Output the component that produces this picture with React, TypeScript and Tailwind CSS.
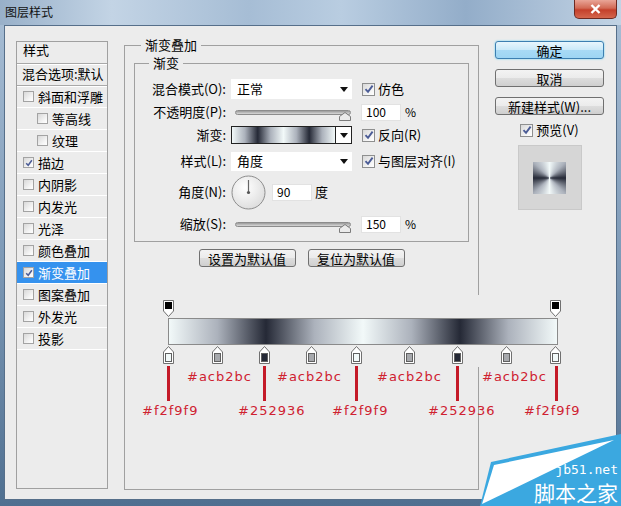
const sans = "font-['Noto_Sans_CJK_SC','Noto_Sans',sans-serif]";

const bar =
  "bg-[linear-gradient(90deg,#f2f9f9_0%,#acb2bc_12.5%,#252936_25%,#acb2bc_37.5%,#f2f9f9_50%,#acb2bc_62.5%,#252936_75%,#acb2bc_87.5%,#f2f9f9_100%)]";

function Box({ on, small }: { on?: boolean; small?: boolean }) {
  return (
    <span
      className={
        (small ? "h-[11px] w-[11px] border-[#a3a3a3]" : "h-[13px] w-[13px] border-[#8e8f8f]") +
        " inline-flex shrink-0 items-center justify-center border bg-[linear-gradient(135deg,#d8d8d8,#f6f6f6_70%,#ffffff)]"
      }
    >
      {on && (
        <svg viewBox="0 0 10 10" className={small ? "h-[8px] w-[8px]" : "h-[10px] w-[10px]"}>
          <path d="M1.5 5.2 L4 7.8 L8.6 1.6" stroke="#4b5c96" strokeWidth="1.9" fill="none" />
        </svg>
      )}
    </span>
  );
}

function Arrow() {
  return (
    <svg width="8" height="5" viewBox="0 0 8 5">
      <path d="M0 0 H8 L4 5 Z" fill="#111" />
    </svg>
  );
}

function Slider() {
  return (
    <div className="relative ml-[5px] flex h-[20px] w-[121px] items-center pl-[4px]">
      <div className="h-[5px] w-[116px] rounded-full border border-[#8c8c8c] bg-[linear-gradient(180deg,#9a9a9a,#d8d8d8)]" />
      <svg className="absolute right-[1px] top-[10px]" width="12" height="9" viewBox="0 0 12 9">
        <path d="M0.5 8.5 V4.5 L6 0.5 L11.5 4.5 V8.5 Z" fill="#ebebeb" stroke="#7c7c7c" />
      </svg>
    </div>
  );
}

function Field({ v, w = "w-[40px]" }: { v: string; w?: string }) {
  return (
    <div className={w + " flex h-[17px] items-center border border-[#e2e2e2] bg-white pl-[4px] text-[12px] text-black"}>
      {v}
    </div>
  );
}

function Btn({ children, w, primary }: { children: React.ReactNode; w: string; primary?: boolean }) {
  return (
    <div
      className={
        w +
        " flex h-[18px] items-center justify-center rounded-[3px] border text-[13px] leading-none text-black " +
        (primary
          ? "border-[#3c7fb1] bg-[linear-gradient(180deg,#e8f6fd,#c9e9f9_50%,#a8daf5_51%,#9dd5f3)] shadow-[0_0_2px_#5ad0f5]"
          : "border-[#707070] bg-[linear-gradient(180deg,#f3f3f3,#ebebeb_50%,#dddddd_51%,#cfcfcf)]")
      }
    >
      {children}
    </div>
  );
}

function StopUp({ fill }: { fill: string }) {
  return (
    <svg width="11" height="18" viewBox="0 0 11 18">
      <path d="M0.5 6 L5.5 0.5 L10.5 6 V17.5 H0.5 Z" fill="#fff" stroke="#707070" />
      <rect x="2.5" y="7.5" width="6" height="8" fill={fill} stroke="#606060" />
    </svg>
  );
}

function StopDown() {
  return (
    <svg width="11" height="17" viewBox="0 0 11 17">
      <path d="M0.5 0.5 H10.5 V11 L5.5 16.5 L0.5 11 Z" fill="#fff" stroke="#707070" />
      <rect x="2" y="2" width="7" height="7" fill="#000" />
    </svg>
  );
}

const rows: { t: string; on?: boolean; indent?: boolean; sel?: boolean }[] = [
  { t: "斜面和浮雕" },
  { t: "等高线", indent: true },
  { t: "纹理", indent: true },
  { t: "描边", on: true },
  { t: "内阴影" },
  { t: "内发光" },
  { t: "光泽" },
  { t: "颜色叠加" },
  { t: "渐变叠加", on: true, sel: true },
  { t: "图案叠加" },
  { t: "外发光" },
  { t: "投影" },
];

const bottomStops = [
  [38, "#f2f9f9"],
  [87, "#a7a9ad"],
  [134, "#252936"],
  [181, "#a7a9ad"],
  [226, "#f2f9f9"],
  [279, "#a7a9ad"],
  [327, "#252936"],
  [376, "#a7a9ad"],
  [425, "#f2f9f9"],
] as const;

const redLines = [42, 138, 230, 331, 430];
const midLabels = [62, 152, 252, 357];
const endLabels: [number, string][] = [
  [17, "#f2f9f9"],
  [113, "#252936"],
  [207, "#f2f9f9"],
  [303, "#252936"],
  [399, "#f2f9f9"],
];

export default function App() {
  return (
    <div
      className={
        sans +
        " relative h-[506px] w-[621px] overflow-hidden bg-[linear-gradient(180deg,#a9bfd6,#7f9bb8_50%,#4f6f90)] text-black"
      }
    >
      {/* title bar */}
      <div className="flex h-[25px] items-start justify-between bg-[linear-gradient(90deg,#98b0c9,#c3d4e5_18%,#a6bdd5_40%,#b9cde1_55%,#93adc9_75%,#c2d3e4)]">
        <span className="ml-[5px] mt-[3px] text-[12px] leading-[18px] text-[#111]">图层样式</span>
        <div className="mr-[4px] flex h-[19px] w-[43px] items-center justify-center rounded-b-[5px] border border-t-0 border-[#6d2a22] bg-[linear-gradient(180deg,#e9a597,#d26a55_45%,#c4402b_55%,#d4664d)]">
          <svg width="11" height="10" viewBox="0 0 11 10">
            <path d="M1.5 1 L9.5 9 M9.5 1 L1.5 9" stroke="#fff" strokeWidth="2.4" />
          </svg>
        </div>
      </div>

      {/* client */}
      <div className="mx-[4px] flex h-[475px] items-start border border-[#566f8a] bg-[#ececec] pl-[11px] pt-[15px]">
        {/* style list */}
        <div className="flex h-[448px] w-[92px] flex-col border border-[#a0a0a0] text-[13px]">
          <div className="flex h-[22px] shrink-0 items-center border-b border-[#a8a8a8] pb-[5px] pl-[6px] shadow-[0_1px_0_#fff]">
            样式
          </div>
          <div className="mt-[1px] flex h-[21px] shrink-0 items-center overflow-hidden whitespace-nowrap border-b border-[#a8a8a8] pb-[3px] pl-[5px] shadow-[0_1px_0_#fff]">
            混合选项:默认
          </div>
          {rows.map((r) => (
            <div
              key={r.t}
              className={
                "flex h-[22px] shrink-0 items-center gap-[4px] border-b border-white " +
                (r.indent ? "pl-[20px] " : "pl-[6px] ") +
                (r.sel ? "bg-[#3592ee] text-white" : "")
              }
            >
              <Box small on={r.on} />
              {r.t}
            </div>
          ))}
        </div>

        {/* gradient overlay group */}
        <div className="relative ml-[16px] mt-[4px] flex h-[445px] w-[355px] flex-col border border-[#a0a0a0] text-[13px]">
          <span className="absolute -top-[10px] left-[16px] bg-[#ececec] px-[4px] leading-[18px]">渐变叠加</span>

          <div className="relative ml-[9px] mt-[17px] flex h-[179px] w-[335px] shrink-0 flex-col border border-[#a0a0a0]">
            <span className="absolute -top-[10px] left-[14px] bg-[#ececec] px-[4px] leading-[18px]">渐变</span>

            <div className="mt-[15px] flex h-[20px] items-center">
              <span className="w-[91px] text-right">混合模式(O):</span>
              <div className="ml-[5px] flex h-[20px] w-[121px] items-center justify-between bg-white pl-[6px] pr-[4px]">
                正常
                <Arrow />
              </div>
              <span className="ml-[10px] flex items-center gap-[3px]">
                <Box on />
                仿色
              </span>
            </div>

            <div className="mt-[3px] flex h-[20px] items-center">
              <span className="w-[91px] text-right">不透明度(P):</span>
              <Slider />
              <div className="ml-[9px]">
                <Field v="100" />
              </div>
              <span className="ml-[4px] text-[12px]">%</span>
            </div>

            <div className="mt-[3px] flex h-[20px] items-center">
              <span className="w-[91px] text-right">渐变:</span>
              <div className="ml-[5px] flex h-[18px] w-[121px] border border-[#222]">
                <div className={bar + " h-full flex-1"} />
                <div className="flex w-[16px] items-center justify-center border-l border-[#222] bg-white">
                  <Arrow />
                </div>
              </div>
              <span className="ml-[10px] flex items-center gap-[3px]">
                <Box on />
                反向(R)
              </span>
            </div>

            <div className="mt-[6px] flex h-[20px] items-center">
              <span className="w-[91px] text-right">样式(L):</span>
              <div className="ml-[5px] flex h-[19px] w-[121px] items-center justify-between bg-white pl-[6px] pr-[4px]">
                角度
                <Arrow />
              </div>
              <span className="ml-[10px] flex items-center gap-[3px] whitespace-nowrap">
                <Box on />
                与图层对齐(I)
              </span>
            </div>

            <div className="mt-[3px] flex h-[36px] items-center">
              <span className="w-[91px] text-right">角度(N):</span>
              <svg className="ml-[5px]" width="35" height="35" viewBox="0 0 35 35">
                <defs>
                  <radialGradient id="dial" cx="0.4" cy="0.35" r="0.7">
                    <stop offset="0" stopColor="#ffffff" />
                    <stop offset="1" stopColor="#dcdcdc" />
                  </radialGradient>
                </defs>
                <circle cx="17.5" cy="17.5" r="16.5" fill="url(#dial)" stroke="#8d8d8d" />
                <line x1="17.5" y1="17.5" x2="17.5" y2="5" stroke="#666" strokeWidth="1.2" />
                <circle cx="17.5" cy="17.5" r="1.6" fill="#555" />
              </svg>
              <div className="ml-[6px]">
                <Field v="90" />
              </div>
              <span className="ml-[3px]">度</span>
            </div>

            <div className="mt-[4px] flex h-[20px] items-center">
              <span className="w-[91px] text-right">缩放(S):</span>
              <Slider />
              <div className="ml-[9px]">
                <Field v="150" />
              </div>
              <span className="ml-[4px] text-[12px]">%</span>
            </div>
          </div>

          <div className="mt-[7px] flex justify-center gap-[12px]">
            <Btn w="w-[97px]">设置为默认值</Btn>
            <Btn w="w-[97px]">复位为默认值</Btn>
          </div>

          {/* gradient editor */}
          <div className="relative mt-[28px] h-[72px] w-[465px] shrink-0 bg-[#ececec]">
            <div className="absolute left-[38px] top-[5px]">
              <StopDown />
            </div>
            <div className="absolute left-[425px] top-[5px]">
              <StopDown />
            </div>
            <div className={bar + " ml-[43px] mt-[23px] h-[27px] w-[390px] border border-[#8a8a8a]"} />
            {bottomStops.map(([x, c]) => (
              <div key={x} className="absolute top-[51px]" style={{ left: x }}>
                <StopUp fill={c} />
              </div>
            ))}
          </div>

          {/* colour notes */}
          <div className="relative h-[54px] w-[465px] shrink-0 font-['DejaVu_Sans',sans-serif] text-[13px] leading-[16px] tracking-[1px] text-[#cf2130]">
            {redLines.map((x) => (
              <div key={x} className="absolute -top-[1px] h-[35px] w-[3px] bg-[#c41a28]" style={{ left: x }} />
            ))}
            {midLabels.map((x) => (
              <span key={x} className="absolute top-[2px]" style={{ left: x }}>
                #acb2bc
              </span>
            ))}
            {endLabels.map(([x, t]) => (
              <span key={x} className="absolute top-[36px]" style={{ left: x }}>
                {t}
              </span>
            ))}
          </div>
        </div>

        {/* buttons */}
        <div className="ml-[16px] flex w-[109px] flex-col items-center text-[13px]">
          <Btn w="w-[109px]" primary>
            确定
          </Btn>
          <div className="mt-[10px]">
            <Btn w="w-[109px]">取消</Btn>
          </div>
          <div className="mt-[10px]">
            <Btn w="w-[109px]">新建样式(W)...</Btn>
          </div>
          <div className="mt-[6px] flex h-[18px] items-center gap-[3px]">
            <Box on />
            预览(V)
          </div>
          <div className="mt-[6px] flex h-[65px] w-[64px] items-center justify-center border border-[#c9c9c9] bg-[#d6d6d6]">
            <div className="h-[32px] w-[33px] bg-[conic-gradient(#f2f9f9,#acb2bc_12.5%,#252936_25%,#acb2bc_37.5%,#f2f9f9_50%,#acb2bc_62.5%,#252936_75%,#acb2bc_87.5%,#f2f9f9)]" />
          </div>
        </div>
      </div>

      {/* site watermark */}
      <svg className="absolute left-[480px] top-[430px]" width="141" height="76" viewBox="0 0 141 76">
        <polygon points="11,32 141,4 141,76 0,76" fill="#3ba8e0" />
        <polygon points="14,35 134,10 2,74" fill="#ffffff" />
      </svg>
      <div className="absolute right-[3px] top-[462px] flex flex-col items-end gap-[3px] text-white">
        <span className="font-['DejaVu_Sans_Mono',monospace] text-[13px] leading-[16px]">jb51.net</span>
        <span className="text-[21px] leading-[23px]">脚本之家</span>
      </div>
    </div>
  );
}
